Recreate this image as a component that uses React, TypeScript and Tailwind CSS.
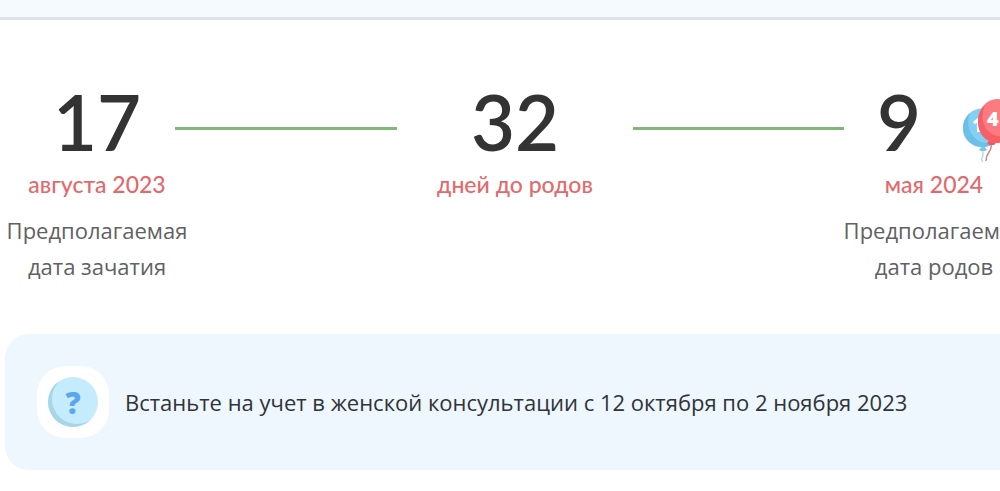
import React from 'react';

interface MilestoneProps {
  value: string;
  label: string;
  children?: React.ReactNode;
}

const Milestone: React.FC<MilestoneProps> = ({ value, label, children }) => (
  <>
    <div className="text-[76px] leading-[77px] font-semibold text-[#333333] font-['Lato',sans-serif]">
      {children ? <div className="pr-[70px]">{value}</div> : value}
    </div>
    {children}
    <div className="mt-2 text-[23px] leading-8 font-medium text-[#e26a6c] font-['Lato',sans-serif]">{label}</div>
  </>
);

const Balloons: React.FC = () => (
  <svg viewBox="0 0 54 66" className="w-[54px] h-[66px]" aria-hidden="true">
    <path d="M19 50 Q21 55 19 59 Q18 61 20 63" fill="none" stroke="#b5dbe8" strokeWidth="1.5" />
    <path d="M20 46 L24 51 L22 52 L18 52 L16 51 Z" fill="#79c8ec" />
    <ellipse cx="19" cy="29" rx="19" ry="19.5" fill="#82d0f3" />
    <path d="M7 14 Q2 28 11 38 Q20 47 32 43 Q24 50 14 47 Q0 42 0 29 Q0 20 7 14" fill="#6cc0e6" />
    <text x="9" y="33" fontSize="19" fontWeight="800" fill="#ffffff" className="font-['Open_Sans',sans-serif]">1</text>
    <path d="M28 44 Q29 49 26 53 Q23 57 23 62" fill="none" stroke="#c98587" strokeWidth="1.5" />
    <path d="M29 39 L33 44 L31 46 L26 46 L24 44 Z" fill="#f05a60" />
    <ellipse cx="34" cy="22" rx="19" ry="22" fill="#fb7b80" />
    <path d="M22 6 Q16 22 25 32 Q35 41 49 35 Q42 44 33 44 Q15 41 15 22 Q15 12 22 6" fill="#f75f66" />
    <text x="24" y="27" fontSize="20" fontWeight="800" fill="#ffffff" className="font-['Open_Sans',sans-serif]">4</text>
  </svg>
);

const App: React.FC = () => {
  return (
    <div className="min-h-screen overflow-hidden bg-white font-['Open_Sans',sans-serif]">
      <header className="h-5 bg-[#f5faff] border-b-3 border-[#dfe3e8]" />

      <main className="pl-[5px] -mr-[26px]">
        {/* Timeline */}
        <section className="flex items-start pt-[63px] text-center">
          <div className="w-46 shrink-0">
            <Milestone value="17" label="августа 2023" />
            <p className="mt-3 text-[22px] leading-9 text-[#5f6163]">
              Предполагаемая<br />дата зачатия
            </p>
          </div>
          <div className="grow-[222] basis-0 h-[3px] mt-11 -ml-[14px] bg-[#80b878]" />
          <div className="w-[236px] shrink-0">
            <Milestone value="32" label="дней до родов" />
          </div>
          <div className="grow-[211] basis-0 h-[3px] mt-11 -mr-0.5 bg-[#80b878]" />
          <div className="relative w-46 shrink-0">
            <Milestone value="9" label="мая 2024">
              <div className="absolute left-[121px] top-4">
                <Balloons />
              </div>
            </Milestone>
            <p className="mt-3 text-[22px] leading-9 text-[#5f6163]">
              Предполагаемая<br />дата родов
            </p>
          </div>
        </section>

        {/* Reminder */}
        <section className="mt-[50px] flex items-center gap-4 rounded-3xl bg-[#eef7fd] px-8 py-8">
          <div className="flex size-[72px] shrink-0 items-center justify-center rounded-[28px] bg-white">
            <div className="flex size-[50px] items-center justify-center rounded-full bg-[#c5ecfd] text-[30px] font-extrabold text-[#5ba6f0] shadow-[inset_4px_-3px_0_#a9d5e8]">
              ?
            </div>
          </div>
          <p className="text-[22px] leading-9 text-[#303438]">
            Встаньте на учет в женской консультации с 12 октября по 2 ноября 2023
          </p>
        </section>
      </main>
    </div>
  );
};

export default App;
